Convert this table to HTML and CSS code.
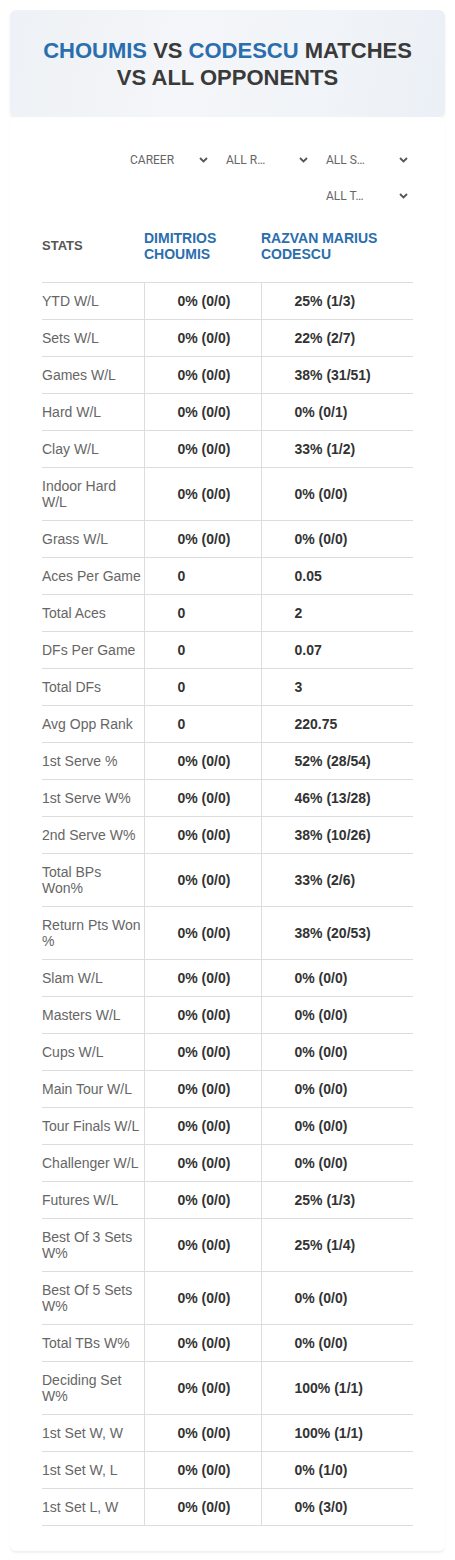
FILE: index.html
```html
<!DOCTYPE html>
<html lang="en">
  <head>
    <meta charset="UTF-8" />
    <title>Choumis vs Codescu</title>
    <link rel="stylesheet" href="styles.css">
  </head>
  <body>
    <div class="page">
      <div class="title-card">
        <h1><span class="player">CHOUMIS</span> VS <span class="player">CODESCU</span> MATCHES VS ALL OPPONENTS</h1>
      </div>

      <div class="stats-card">
        <div class="filters">
          <div class="filter filter-first">
            <span>CAREER</span>
            <svg width="9" height="6" viewBox="0 0 9 6"><path d="M1 1l3.5 3.5L8 1" fill="none" stroke="#555" stroke-width="1.8"/></svg>
          </div>
          <div class="filter">
            <span>ALL R…</span>
            <svg width="9" height="6" viewBox="0 0 9 6"><path d="M1 1l3.5 3.5L8 1" fill="none" stroke="#555" stroke-width="1.8"/></svg>
          </div>
          <div class="filter">
            <span>ALL S…</span>
            <svg width="9" height="6" viewBox="0 0 9 6"><path d="M1 1l3.5 3.5L8 1" fill="none" stroke="#555" stroke-width="1.8"/></svg>
          </div>
          <div class="filter">
            <span>ALL T…</span>
            <svg width="9" height="6" viewBox="0 0 9 6"><path d="M1 1l3.5 3.5L8 1" fill="none" stroke="#555" stroke-width="1.8"/></svg>
          </div>
        </div>

        <table class="stats">
          <colgroup>
            <col class="col-label">
            <col class="col-p1">
            <col class="col-p2">
          </colgroup>
          <thead>
            <tr>
              <th class="head-stats">STATS</th>
              <th class="head-player">DIMITRIOS CHOUMIS</th>
              <th class="head-player">RAZVAN MARIUS CODESCU</th>
            </tr>
          </thead>
          <tbody>
            <tr><td>YTD W/L</td><td>0% (0/0)</td><td>25% (1/3)</td></tr>
            <tr><td>Sets W/L</td><td>0% (0/0)</td><td>22% (2/7)</td></tr>
            <tr><td>Games W/L</td><td>0% (0/0)</td><td>38% (31/51)</td></tr>
            <tr><td>Hard W/L</td><td>0% (0/0)</td><td>0% (0/1)</td></tr>
            <tr><td>Clay W/L</td><td>0% (0/0)</td><td>33% (1/2)</td></tr>
            <tr><td>Indoor Hard W/L</td><td>0% (0/0)</td><td>0% (0/0)</td></tr>
            <tr><td>Grass W/L</td><td>0% (0/0)</td><td>0% (0/0)</td></tr>
            <tr><td>Aces Per Game</td><td>0</td><td>0.05</td></tr>
            <tr><td>Total Aces</td><td>0</td><td>2</td></tr>
            <tr><td>DFs Per Game</td><td>0</td><td>0.07</td></tr>
            <tr><td>Total DFs</td><td>0</td><td>3</td></tr>
            <tr><td>Avg Opp Rank</td><td>0</td><td>220.75</td></tr>
            <tr><td>1st Serve %</td><td>0% (0/0)</td><td>52% (28/54)</td></tr>
            <tr><td>1st Serve W%</td><td>0% (0/0)</td><td>46% (13/28)</td></tr>
            <tr><td>2nd Serve W%</td><td>0% (0/0)</td><td>38% (10/26)</td></tr>
            <tr><td>Total BPs Won%</td><td>0% (0/0)</td><td>33% (2/6)</td></tr>
            <tr><td>Return Pts Won %</td><td>0% (0/0)</td><td>38% (20/53)</td></tr>
            <tr><td>Slam W/L</td><td>0% (0/0)</td><td>0% (0/0)</td></tr>
            <tr><td>Masters W/L</td><td>0% (0/0)</td><td>0% (0/0)</td></tr>
            <tr><td>Cups W/L</td><td>0% (0/0)</td><td>0% (0/0)</td></tr>
            <tr><td>Main Tour W/L</td><td>0% (0/0)</td><td>0% (0/0)</td></tr>
            <tr><td>Tour Finals W/L</td><td>0% (0/0)</td><td>0% (0/0)</td></tr>
            <tr><td>Challenger W/L</td><td>0% (0/0)</td><td>0% (0/0)</td></tr>
            <tr><td>Futures W/L</td><td>0% (0/0)</td><td>25% (1/3)</td></tr>
            <tr><td>Best Of 3 Sets W%</td><td>0% (0/0)</td><td>25% (1/4)</td></tr>
            <tr><td>Best Of 5 Sets W%</td><td>0% (0/0)</td><td>0% (0/0)</td></tr>
            <tr><td>Total TBs W%</td><td>0% (0/0)</td><td>0% (0/0)</td></tr>
            <tr><td>Deciding Set W%</td><td>0% (0/0)</td><td>100% (1/1)</td></tr>
            <tr><td>1st Set W, W</td><td>0% (0/0)</td><td>100% (1/1)</td></tr>
            <tr><td>1st Set W, L</td><td>0% (0/0)</td><td>0% (1/0)</td></tr>
            <tr><td>1st Set L, W</td><td>0% (0/0)</td><td>0% (3/0)</td></tr>
          </tbody>
        </table>
      </div>
    </div>
  </body>
</html>
```

FILE: styles.css
```css
body {
  margin: 0;
  background-color: #fff;
  font-family: "Liberation Sans", Arial, sans-serif;
}
.page {
  padding: 10px;
}
.title-card {
  background: linear-gradient(100deg, #eef1f5 0%, #f4f6f9 40%, #f1f4f8 70%, #ebf0f6 100%);
  border-radius: 6px;
  box-shadow: 0 2px 3px rgba(0, 0, 0, 0.06);
  padding: 27px 20px 26px;
}
h1 {
  margin: 0;
  text-align: center;
  font-size: 22px;
  line-height: 27px;
  font-weight: bold;
  color: #3a3a3a;
}
.player {
  color: #2a6ead;
}
.stats-card {
  background-color: #fff;
  border-radius: 6px;
  box-shadow: 0 2px 2px rgba(0, 0, 0, 0.06);
  padding: 29px 32px 25px;
}
.filters {
  display: flex;
  flex-wrap: wrap;
  justify-content: flex-end;
  gap: 8px 10px;
  padding-left: 80px;
}
.filter {
  width: 90px;
  height: 28px;
  display: flex;
  align-items: center;
  justify-content: space-between;
  padding: 0 5px 0 3px;
  box-sizing: border-box;
  font-family: Roboto, sans-serif;
  font-size: 12px;
  color: #666;
}
.filter-first {
  padding-left: 7px;
}
.stats {
  width: 100%;
  border-collapse: collapse;
  margin-top: 12px;
}
.col-label {
  width: 102px;
}
.col-p1 {
  width: 117px;
}
th {
  text-align: left;
  font-weight: bold;
  line-height: 16px;
  padding: 8px 0 20px;
  vertical-align: middle;
}
.head-stats {
  font-size: 13px;
  color: #555;
}
.head-player {
  font-size: 14px;
  color: #2a6ead;
  padding-right: 10px;
}
td {
  border-top: 1px solid #ddd;
  border-bottom: 1px solid #ddd;
  padding: 10px 0 10px 33px;
  font-size: 14px;
  line-height: 16px;
  font-weight: bold;
  color: #333;
  vertical-align: middle;
}
td:first-child {
  padding-left: 0;
  font-weight: normal;
  color: #666;
}
td + td {
  border-left: 1px solid #ddd;
}
```
